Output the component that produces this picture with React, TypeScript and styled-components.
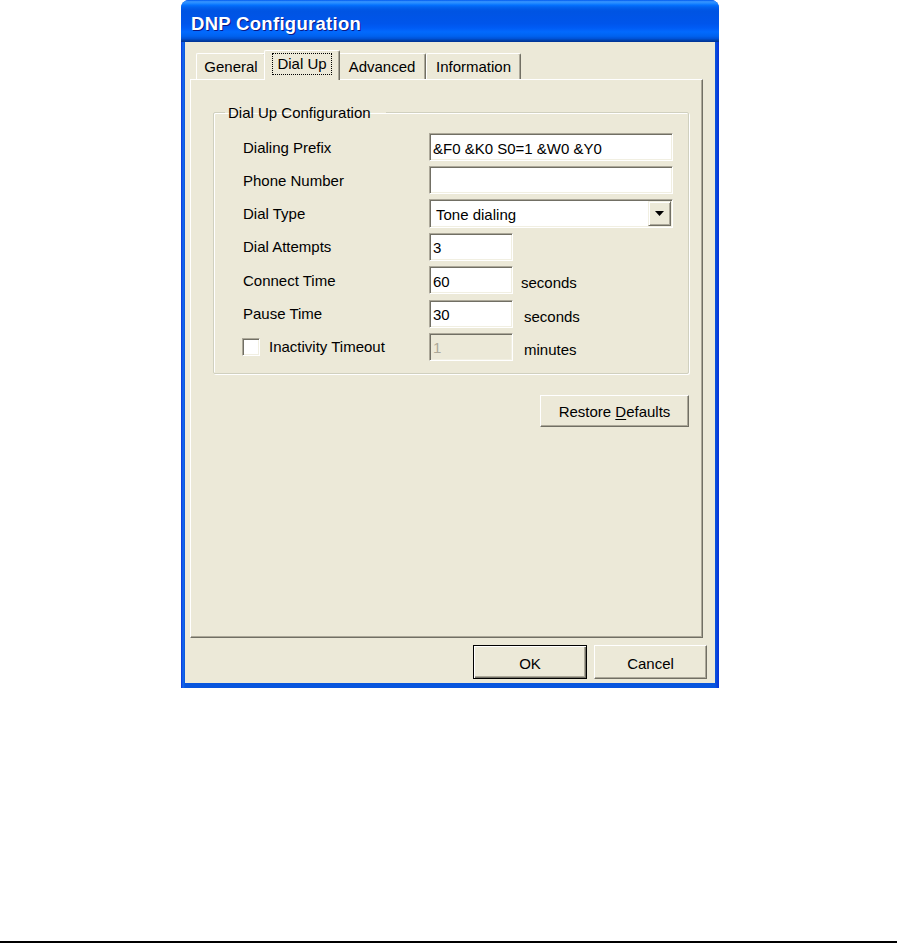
import React from 'react'
import styled, { createGlobalStyle } from 'styled-components'

const GlobalStyle = createGlobalStyle`
  html, body {
    margin: 0;
    padding: 0;
    background: #fff;
  }
  body {
    font-family: "Liberation Sans", Arial, sans-serif;
    font-size: 15px;
    color: #000;
  }
`

const Page = styled.div`
  width: 897px;
  height: 944px;
  display: flex;
  flex-direction: column;
  overflow: hidden;
`

const Window = styled.div`
  margin-left: 181px;
  width: 538px;
  height: 688px;
  display: flex;
  flex-direction: column;
  border-radius: 8px 8px 0 0;
  overflow: hidden;
  background: #0a4ed8;
`

const TitleBar = styled.div`
  height: 42px;
  flex: none;
  display: flex;
  align-items: center;
  padding: 6px 0 0 10px;
  box-sizing: border-box;
  background: linear-gradient(
    180deg,
    #0058ee 0%,
    #3593ff 4%,
    #288eff 7%,
    #127dff 10%,
    #036ffc 13%,
    #0262ee 17%,
    #0057e5 23%,
    #0054e3 28%,
    #0055eb 56%,
    #005bf5 66%,
    #026afe 76%,
    #0062ef 86%,
    #0052d6 92%,
    #0040ab 96%,
    #003092 100%
  );
`

const Title = styled.span`
  font-family: "Liberation Sans", Arial, sans-serif;
  font-weight: bold;
  font-size: 18.5px;
  color: #fff;
  text-shadow: 1px 1px 0 #0a1883;
  letter-spacing: 0.3px;
`

const Frame = styled.div`
  flex: 1;
  display: flex;
  padding: 0 4px 5px 4px;
  background: linear-gradient(90deg, #0831d9 0px, #166aee 2px, #0855dd 4px, #0855dd calc(100% - 4px), #0831d9 100%);
`

const Body = styled.div`
  flex: 1;
  display: flex;
  flex-direction: column;
  background: #ece9d8;
  padding: 8px 8px 4px 5px;
`

const TabRow = styled.div`
  display: flex;
  align-items: flex-end;
  height: 29px;
  margin: 0 4px 0 6px;
  position: relative;
  z-index: 1;
`

const Tab = styled.div<{ $w: number; $active?: boolean }>`
  box-sizing: border-box;
  width: ${p => p.$w}px;
  height: ${p => (p.$active ? 30 : 26)}px;
  margin: ${p => (p.$active ? '0 -2px -1px -2px' : '0')};
  position: relative;
  z-index: ${p => (p.$active ? 2 : 1)};
  display: flex;
  align-items: center;
  justify-content: center;
  padding-bottom: ${p => (p.$active ? 3 : 0)}px;
  background: #ece9d8;
  border-top: 1px solid #fff;
  border-left: 1px solid #fff;
  border-right: 1px solid #716f64;
  box-shadow: inset -1px 0 0 #aca899;
  border-radius: 2px 2px 0 0;
`

const FocusText = styled.span`
  padding: 1px 4px 2px 4px;
  outline: 1px dotted #000;
`

const Panel = styled.div`
  flex: 1;
  display: flex;
  flex-direction: column;
  align-items: flex-start;
  margin-right: 4px;
  padding: 24px 0 0 22px;
  background: #ece9d8;
  border-top: 1px solid #fff;
  border-left: 1px solid #fff;
  border-right: 1px solid #716f64;
  border-bottom: 1px solid #716f64;
  box-shadow: inset -1px -1px 0 #aca899;
`

const Column = styled.div`
  width: 476px;
  display: flex;
  flex-direction: column;
`

const Group = styled.fieldset`
  margin: 0;
  padding: 0;
  min-width: 0;
  border: 1px solid #d0d0bf;
  box-shadow: 1px 1px 0 #fff, inset 1px 1px 0 #fff;
  border-radius: 2px;
`

const Legend = styled.legend`
  margin-left: 11px;
  padding: 0 15px 0 3px;
  font-size: 15px;
  line-height: 17px;
`

const Rows = styled.div`
  display: flex;
  flex-direction: column;
  gap: 5.33px;
  padding: 12px 0 12px 29px;
`

const Row = styled.div`
  display: flex;
  align-items: center;
  height: 28px;
`

const Label = styled.label`
  width: 186px;
  flex: none;
  display: flex;
  align-items: center;
  white-space: nowrap;
`

const Field = styled.input<{ $w: number }>`
  box-sizing: border-box;
  width: ${p => p.$w}px;
  height: 28px;
  margin: 0;
  padding: 2px 3px 0 3px;
  font-family: "Liberation Sans", Arial, sans-serif;
  font-size: 15px;
  color: #000;
  background: #fff;
  border: 1px solid;
  border-color: #aca899 #fff #fff #aca899;
  box-shadow: inset 1px 1px 0 #716f64, inset -1px -1px 0 #f1efe2;
  outline: none;

  &:disabled {
    background: #ece9d8;
    color: #aca899;
  }
`

const Combo = styled.div`
  box-sizing: border-box;
  width: 244px;
  height: 29px;
  display: flex;
  align-items: stretch;
  background: #fff;
  border: 1px solid;
  border-color: #aca899 #fff #fff #aca899;
  box-shadow: inset 1px 1px 0 #716f64, inset -1px -1px 0 #f1efe2;
  padding: 1px;
`

const ComboText = styled.span`
  flex: 1;
  display: flex;
  align-items: center;
  padding: 2px 0 0 5px;
`

const ComboButton = styled.span`
  box-sizing: border-box;
  width: 23px;
  display: flex;
  align-items: center;
  justify-content: center;
  background: #ece9d8;
  border: 1px solid;
  border-color: #f1efe2 #716f64 #716f64 #f1efe2;
  box-shadow: inset 1px 1px 0 #fff, inset -1px -1px 0 #aca899;
`

const Unit = styled.span<{ $gap: number }>`
  margin-left: ${p => p.$gap}px;
  padding-top: 5px;
`

const Check = styled.span`
  box-sizing: border-box;
  width: 18px;
  height: 18px;
  margin: 0 9px 0 -1px;
  background: #fff;
  border: 1px solid;
  border-color: #aca899 #fff #fff #aca899;
  box-shadow: inset 1px 1px 0 #716f64, inset -1px -1px 0 #f1efe2;
`

const Button = styled.button<{ $w: number; $h: number; $default?: boolean }>`
  box-sizing: border-box;
  width: ${p => p.$w}px;
  height: ${p => p.$h}px;
  margin: 0;
  padding: 2px 0 0 0;
  font-family: "Liberation Sans", Arial, sans-serif;
  font-size: 15px;
  color: #000;
  background: #ece9d8;
  border: 1px solid ${p => (p.$default ? '#000' : '#716f64')};
  border-color: ${p => (p.$default ? '#000' : '#fff #716f64 #716f64 #fff')};
  box-shadow: ${p =>
    p.$default
      ? 'inset 1px 1px 0 #fff, inset -1px -1px 0 #716f64, inset -2px -2px 0 #aca899'
      : 'inset -1px -1px 0 #aca899'};
`

const RestoreRow = styled.div`
  display: flex;
  justify-content: flex-end;
  margin-top: 21px;
`

const Accel = styled.u`
  text-decoration-thickness: 1px;
  text-underline-offset: 2px;
`

const ButtonBar = styled.div`
  display: flex;
  justify-content: flex-end;
  gap: 7px;
  margin-top: 7px;
`

const Rule = styled.div`
  margin-top: 253px;
  height: 2px;
  width: 100%;
  background: #000;
  flex: none;
`

const tabs = [
  { name: 'General', w: 70 },
  { name: 'Dial Up', w: 76, active: true },
  { name: 'Advanced', w: 88 },
  { name: 'Information', w: 95 },
]

const DownArrow = () => (
  <svg width="9" height="5" viewBox="0 0 9 5">
    <path d="M0 0h9L4.5 5z" fill="#000" />
  </svg>
)

export default function App() {
  return (
    <>
      <GlobalStyle />
      <Page>
        <Window>
          <TitleBar>
            <Title>DNP Configuration</Title>
          </TitleBar>
          <Frame>
            <Body>
              <TabRow>
                {tabs.map(t => (
                  <Tab key={t.name} $w={t.w} $active={t.active}>
                    {t.active ? <FocusText>{t.name}</FocusText> : t.name}
                  </Tab>
                ))}
              </TabRow>
              <Panel>
                <Column>
                  <Group>
                    <Legend>Dial Up Configuration</Legend>
                    <Rows>
                      <Row>
                        <Label>Dialing Prefix</Label>
                        <Field $w={244} defaultValue="&F0 &K0 S0=1 &W0 &Y0" />
                      </Row>
                      <Row>
                        <Label>Phone Number</Label>
                        <Field $w={244} defaultValue="" />
                      </Row>
                      <Row>
                        <Label>Dial Type</Label>
                        <Combo>
                          <ComboText>Tone dialing</ComboText>
                          <ComboButton>
                            <DownArrow />
                          </ComboButton>
                        </Combo>
                      </Row>
                      <Row>
                        <Label>Dial Attempts</Label>
                        <Field $w={84} defaultValue="3" />
                      </Row>
                      <Row>
                        <Label>Connect Time</Label>
                        <Field $w={84} defaultValue="60" />
                        <Unit $gap={8}>seconds</Unit>
                      </Row>
                      <Row>
                        <Label>Pause Time</Label>
                        <Field $w={84} defaultValue="30" />
                        <Unit $gap={11}>seconds</Unit>
                      </Row>
                      <Row>
                        <Label>
                          <Check />
                          Inactivity Timeout
                        </Label>
                        <Field $w={84} defaultValue="1" disabled />
                        <Unit $gap={11}>minutes</Unit>
                      </Row>
                    </Rows>
                  </Group>
                  <RestoreRow>
                    <Button $w={149} $h={32}>
                      Restore <Accel>D</Accel>efaults
                    </Button>
                  </RestoreRow>
                </Column>
              </Panel>
              <ButtonBar>
                <Button $w={114} $h={34} $default>
                  OK
                </Button>
                <Button $w={113} $h={34}>
                  Cancel
                </Button>
              </ButtonBar>
            </Body>
          </Frame>
        </Window>
        <Rule />
      </Page>
    </>
  )
}
